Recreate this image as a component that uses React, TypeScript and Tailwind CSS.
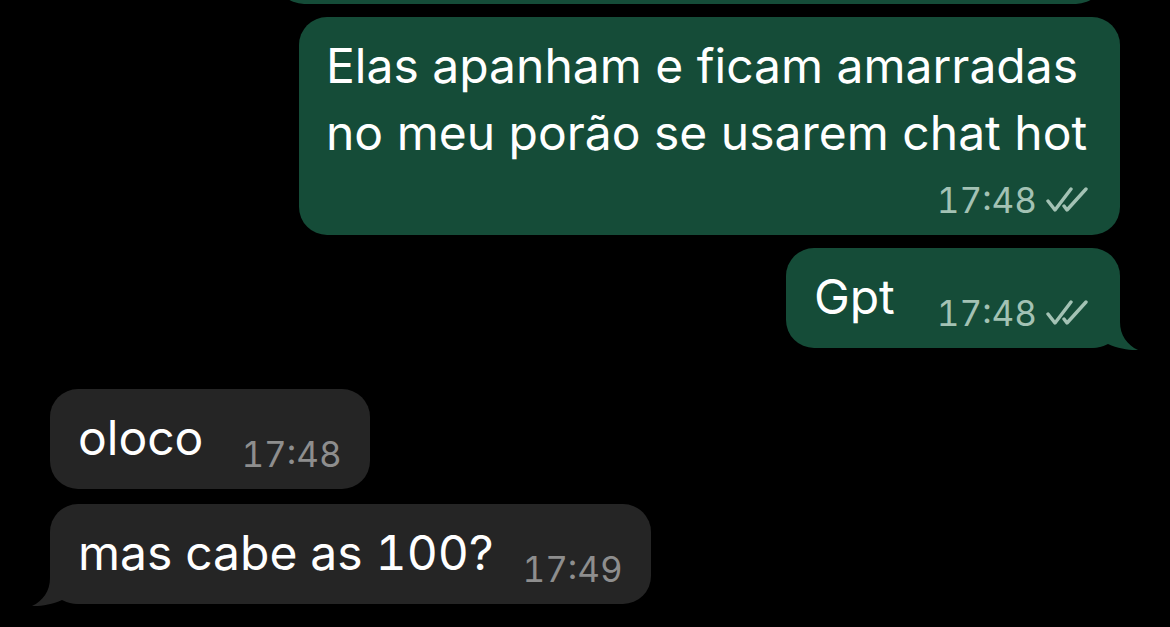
import React from "react";

const GREEN = "#154c38";
const GRAY = "#252525";

function Checks() {
  return (
    <svg width="44" height="26" viewBox="0 0 44 26" className="ml-[8px] shrink-0" fill="none" stroke="#a3c2b4" strokeWidth="3.4" strokeLinecap="round" strokeLinejoin="round">
      <path d="M3 14 L10 23 L26 2" />
      <path d="M19 19 L22 23 L41 2" />
    </svg>
  );
}

function TailRight({ color }: { color: string }) {
  return (
    <svg width="50" height="38" viewBox="0 0 50 38" className="absolute right-[-20px] bottom-[-3px]">
      <path d="M0 0 L30 0 L30 9 C30 22 37 32 48 37 C40 37.5 28 35.5 18 31 C12 34 6 35 0 35 Z" fill={color} />
    </svg>
  );
}

function TailLeft({ color }: { color: string }) {
  return (
    <svg width="50" height="38" viewBox="0 0 50 38" className="absolute left-[-20px] bottom-[-3px]">
      <path d="M50 0 L20 0 L20 9 C20 22 13 32 2 37 C10 37.5 22 35.5 32 31 C38 34 44 35 50 35 Z" fill={color} />
    </svg>
  );
}

const font = { fontFamily: "Inter, 'Noto Sans', sans-serif" };

export default function App() {
  return (
    <div className="w-[1170px] h-[627px] bg-black overflow-hidden flex flex-col" style={font}>
      {/* partial previous bubble */}
      <div className="h-[4px] overflow-hidden flex justify-end pr-[66px]">
        <div className="w-[828px] h-[60px] mt-[-56px] rounded-[28px]" style={{ backgroundColor: GREEN }} />
      </div>

      {/* long outgoing message */}
      <div className="flex justify-end pr-[50px] mt-[13px]">
        <div className="w-[821px] rounded-[28px] pl-[27px] pr-[31px] pt-[15px] pb-[15px]" style={{ backgroundColor: GREEN }}>
          <div className="text-white text-[48px] leading-[67px] whitespace-nowrap">
            Elas apanham e ficam amarradas<br />no meu porão se usarem chat hot
          </div>
          <div className="flex justify-end items-center h-[40px] mt-[14px]">
            <span className="text-[35px] leading-[40px] tabular-nums text-[#a3c2b4]">17:48</span>
            <Checks />
          </div>
        </div>
      </div>

      {/* Gpt */}
      <div className="flex justify-end pr-[50px] mt-[13px]">
        <div className="relative flex items-end rounded-[28px] pl-[28px] pr-[31px] pt-[15px] pb-[18px]" style={{ backgroundColor: GREEN }}>
          <span className="text-white text-[48px] leading-[67px]">Gpt</span>
          <span className="relative top-[3px] ml-[42px] flex items-center h-[40px]">
            <span className="text-[35px] leading-[40px] tabular-nums text-[#a3c2b4]">17:48</span>
            <Checks />
          </span>
          <TailRight color={GREEN} />
        </div>
      </div>

      {/* oloco */}
      <div className="flex justify-start pl-[50px] mt-[41px]">
        <div className="relative flex items-end rounded-[28px] pl-[28px] pr-[28px] pt-[15px] pb-[18px]" style={{ backgroundColor: GRAY }}>
          <span className="text-white text-[48px] leading-[67px]">oloco</span>
          <span className="relative top-[3px] ml-[38px] text-[35px] leading-[40px] tabular-nums text-[#8e8e8e]">17:48</span>
        </div>
      </div>

      {/* mas cabe as 100? */}
      <div className="flex justify-start pl-[50px] mt-[15px]">
        <div className="relative flex items-end rounded-[28px] pl-[28px] pr-[28px] pt-[15px] pb-[18px]" style={{ backgroundColor: GRAY }}>
          <span className="text-white text-[48px] leading-[67px] tabular-nums">mas cabe as 100?</span>
          <span className="relative top-[3px] ml-[29px] text-[35px] leading-[40px] tabular-nums text-[#8e8e8e]">17:49</span>
          <TailLeft color={GRAY} />
        </div>
      </div>
    </div>
  );
}
